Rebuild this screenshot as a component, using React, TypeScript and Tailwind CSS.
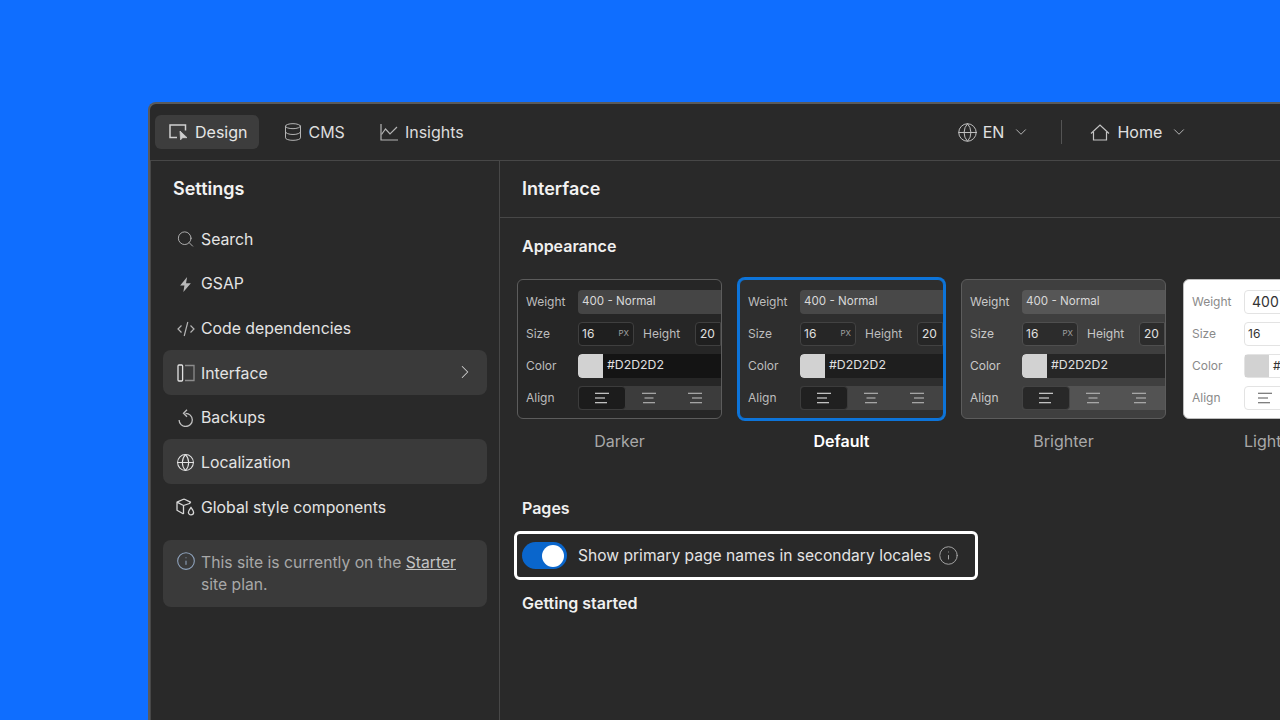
import { ChevronDown, ChevronRight, Database, Globe, Info, Search } from "lucide-react";
import type { ReactNode } from "react";

const DesignIcon = () => (
  <svg width="19" height="17" viewBox="0 0 19 17" fill="none" className="text-[#d0d0d0]">
    <path d="M8 13.500H1V1h15.500v5.500" stroke="currentColor" strokeWidth="1.500" />
    <path d="M11 7l.6 8.800 2-2.100h4.400z" fill="currentColor" stroke="currentColor" strokeWidth="0.800" strokeLinejoin="round" />
  </svg>
);

const ChartIcon = () => (
  <svg width="18" height="17" viewBox="0 0 18 17" fill="none" className="text-[#b4b4b4]">
    <path d="M1 0v16h17" stroke="currentColor" strokeWidth="1.200" />
    <path d="M1.500 10.500 5.500 5l4.500 5 7-7" stroke="currentColor" strokeWidth="1.200" />
  </svg>
);

const CodeIcon = () => (
  <svg width="18" height="16" viewBox="0 0 18 16" fill="none" className="text-[#b4b4b4]">
    <path d="M4.500 4.500 1 8l3.500 3.500M13.500 4.500 17 8l-3.500 3.500M10.800 1 7.200 15" stroke="currentColor" strokeWidth="1.200" />
  </svg>
);

const PanelIcon = () => (
  <svg width="18" height="18" viewBox="0 0 18 18" fill="none">
    <rect x="1" y="1" width="4.600" height="16" rx="1" stroke="#e2e2e2" strokeWidth="1.300" />
    <path d="M8 1.500h9v15H8" stroke="#8c8c8c" strokeWidth="1.300" />
  </svg>
);

const StyleIcon = () => (
  <svg width="19" height="18" viewBox="0 0 19 18" fill="none" className="text-[#d8d8d8]">
    <path d="M8 1 1 4.200v8L7.500 16M8 1l6.500 3.200-1 1.500M1 4.200l6.500 3.300 6-2M7.500 7.500V16" stroke="currentColor" strokeWidth="1.300" strokeLinejoin="round" />
    <path d="M15 9.500c1.500 2 2.600 3.300 2.600 4.800a2.600 2.600 0 0 1-5.200 0c0-1.500 1.100-2.800 2.600-4.800z" stroke="currentColor" strokeWidth="1.300" />
  </svg>
);

const BoltIcon = () => (
  <svg width="11" height="15" viewBox="0 0 10 14" className="text-[#b8b8b8]">
    <path d="M6.500 0 0 8h4L3 14l7-8.200H5.500z" fill="currentColor" />
  </svg>
);

const BackupIcon = () => (
  <svg width="18" height="18" viewBox="0 0 18 18" fill="none" className="text-[#c0c0c0]">
    <path d="M8.500 4.300a6.600 6.600 0 1 1-6.400 6.600" stroke="currentColor" strokeWidth="1.300" />
    <path d="M10 .8 6.500 4.300 10 7.800" stroke="currentColor" strokeWidth="1.300" />
  </svg>
);

const HomeIcon = () => (
  <svg width="20" height="17" viewBox="0 0 20 17" fill="none" className="text-[#c4c4c4]">
    <path d="M1 9.500 10 1l9 8.500M3.500 8v8h13V8" stroke="currentColor" strokeWidth="1.200" />
  </svg>
);

const AlignIcon = ({ side, color }: { side: "left" | "center" | "right"; color: string }) => {
  const short = side === "left" ? "M1 7h10" : side === "center" ? "M3.500 7h9" : "M5 7h10";
  return (
    <svg width="16" height="14" viewBox="0 0 16 14" fill="none" stroke={color} strokeWidth="1.100">
      <path d="M1 2.300h14" />
      <path d={short} />
      <path d={side === "left" ? "M1 11.700h12" : side === "center" ? "M2 11.700h12" : "M3 11.700h12"} />
    </svg>
  );
};

function SideItem({ icon, label, active, chevron }: { icon: ReactNode; label: string; active?: boolean; chevron?: boolean }) {
  return (
    <div className={`flex h-[44.700px] items-center gap-[6px] rounded-lg px-[13px] text-[15.800px] text-[#e4e4e4] ${active ? "bg-[#3a3a3a]" : ""}`}>
      <span className="flex w-[19px] justify-center pt-[2px]">{icon}</span>
      <span className="flex-1 pt-[2px]">{label}</span>
      {chevron && <ChevronRight size={22} strokeWidth={1.100} className="mr-[-2px] text-[#cfcfcf]" />}
    </div>
  );
}

const THEMES = {
  darker: {
    card: "border border-[#5c5c5c] bg-[#262626]",
    label: "text-[#bdbdbd]",
    weight: "bg-[#454545]",
    input: "border border-[#3f3f3f] bg-[#1f1f1f]",
    color: "bg-[#141414]",
    align: "bg-[#3c3c3c]",
    alignOn: "border border-[#3c3c3c] bg-[#1c1c1c]",
  },
  fallback: {
    card: "ring-[2px] ring-[#0d74d9] border border-[#0d74d9] bg-[#2e2e2e]",
    label: "text-[#bdbdbd]",
    weight: "bg-[#484848]",
    input: "border border-[#424242] bg-[#262626]",
    color: "bg-[#1e1e1e]",
    align: "bg-[#434343]",
    alignOn: "border border-[#3c3c3c] bg-[#202020]",
  },
  brighter: {
    card: "border border-[#5c5c5c] bg-[#3f3f3f]",
    label: "text-[#c8c8c8]",
    weight: "bg-[#565656]",
    input: "border border-[#4f4f4f] bg-[#2c2c2c]",
    color: "bg-[#262626]",
    align: "bg-[#535353]",
    alignOn: "border border-[#444] bg-[#282828]",
  },
};

function DarkCard({ theme, name, selected }: { theme: keyof typeof THEMES; name: string; selected?: boolean }) {
  const t = THEMES[theme];
  return (
    <div className="flex w-[205px] shrink-0 flex-col items-center">
      <div className={`flex h-[140px] w-full flex-col justify-center gap-2 rounded-md pt-[1px] font-normal ${t.card}`}>
        <div className="flex h-6 items-center text-xs">
          <span className={`w-[52px] shrink-0 pl-2 ${t.label}`}>Weight</span>
          <div className={`ml-2 flex h-6 flex-1 items-center rounded-l pl-1 text-[11.600px] text-[#d8d8d8] ${t.weight}`}>400 - Normal</div>
        </div>
        <div className="flex h-6 items-center text-xs">
          <span className={`w-[52px] shrink-0 pl-2 ${t.label}`}>Size</span>
          <div className={`ml-2 flex h-6 w-[56px] shrink-0 items-center justify-between rounded pl-[3px] pr-1 text-[#e0e0e0] ${t.input}`}>
            16<span className="text-[8px] text-[#a0a0a0]">PX</span>
          </div>
          <span className={`ml-[9px] w-[44px] shrink-0 ${t.label}`}>Height</span>
          <div className={`ml-[8px] flex h-6 min-w-0 flex-1 items-center rounded-l pl-1 text-[#e0e0e0] ${t.input}`}>20</div>
        </div>
        <div className="flex h-6 items-center text-xs">
          <span className={`w-[52px] shrink-0 pl-2 ${t.label}`}>Color</span>
          <div className={`ml-2 flex h-6 flex-1 items-center overflow-hidden rounded-l text-[12.300px] text-[#e0e0e0] ${t.color}`}>
            <span className="h-full w-[25px] shrink-0 rounded-l bg-[#d2d2d2]" />
            <span className="ml-1">#D2D2D2</span>
          </div>
        </div>
        <div className="flex h-6 items-center text-xs">
          <span className={`w-[52px] shrink-0 pl-2 ${t.label}`}>Align</span>
          <div className={`ml-2 flex h-6 flex-1 items-center rounded-l ${t.align}`}>
            <span className={`flex h-6 w-[48px] shrink-0 items-center justify-center rounded ${t.alignOn}`}><AlignIcon side="left" color="#dedede" /></span>
            <span className="flex w-[46px] shrink-0 justify-center"><AlignIcon side="center" color="#b8b8b8" /></span>
            <span className="flex w-[46px] shrink-0 justify-center"><AlignIcon side="right" color="#b8b8b8" /></span>
          </div>
        </div>
      </div>
      <span className={`mt-[12px] text-base leading-5 ${selected ? "font-semibold text-white" : "text-[#a8a8a8]"}`}>{name}</span>
    </div>
  );
}

function LightCard() {
  return (
    <div className="flex w-[205px] shrink-0 flex-col">
      <div className="flex h-[140px] w-full flex-col justify-center gap-2 overflow-hidden rounded-md border border-[#bdbdbd] bg-white pl-2 pt-[2px] text-xs text-[#8a8a8a]">
        <div className="flex h-6 items-center">
          <span className="w-[52px] shrink-0">Weight</span>
          <div className="flex h-6 flex-1 items-center rounded-l border border-[#e3e3e3] pl-[7px] text-sm text-[#333]">400</div>
        </div>
        <div className="flex h-6 items-center">
          <span className="w-[52px] shrink-0">Size</span>
          <div className="flex h-6 flex-1 items-center rounded-l border border-[#e3e3e3] pl-[3px] text-[#333]">16</div>
        </div>
        <div className="flex h-6 items-center">
          <span className="w-[52px] shrink-0">Color</span>
          <div className="flex h-6 flex-1 items-center rounded-l border border-[#e3e3e3] text-[#333]">
            <span className="h-full w-6 shrink-0 bg-[#d2d2d2]" />
            <span className="ml-1">#D2D2D2</span>
          </div>
        </div>
        <div className="flex h-6 items-center">
          <span className="w-[52px] shrink-0">Align</span>
          <div className="flex h-6 flex-1 items-center rounded-l border border-[#e3e3e3] pl-3">
            <AlignIcon side="left" color="#555" />
          </div>
        </div>
      </div>
      <span className="ml-[61px] mt-[12px] text-base leading-5 text-[#a8a8a8]">Light</span>
    </div>
  );
}

export default function App() {
  return (
    <div className="h-[720px] w-[1280px] overflow-hidden bg-[#0f6eff] pl-[148px] pt-[102px] font-['Inter','Liberation_Sans',sans-serif] text-white">
      <div className="flex h-[640px] w-[1150px] flex-col rounded-tl-lg border-l-2 border-t-2 border-[#5a5a5a] bg-[#292929]">
        {/* top bar */}
        <div className="flex h-[57px] shrink-0 items-center border-b border-[#474747] pl-[5px] text-base">
          <div className="flex h-[34px] items-center gap-[7px] rounded-md bg-[#3d3d3d] pl-[14px] pr-3 text-[#e6e6e6]">
            <DesignIcon />
            <span>Design</span>
          </div>
          <div className="ml-[24px] flex items-center gap-[5px] text-[#dcdcdc]">
            <Database size={20} strokeWidth={1.200} className="text-[#b4b4b4]" />
            <span>CMS</span>
          </div>
          <div className="ml-[35px] flex items-center gap-[7px] text-[#dcdcdc]">
            <ChartIcon />
            <span>Insights</span>
          </div>
          <div className="ml-[493px] flex items-center gap-[5px] text-[#e0e0e0]">
            <Globe size={21} strokeWidth={1.100} className="text-[#c4c4c4]" />
            <span>EN</span>
            <ChevronDown size={18} strokeWidth={1.200} className="ml-[3px] text-[#c4c4c4]" />
          </div>
          <div className="ml-[31px] h-6 w-px bg-[#545454]" />
          <div className="ml-[28px] flex items-center gap-[7px] text-[#e0e0e0]">
            <HomeIcon />
            <span>Home</span>
            <ChevronDown size={18} strokeWidth={1.200} className="ml-[1px] text-[#c4c4c4]" />
          </div>
        </div>

        <div className="flex min-h-0 flex-1">
          {/* sidebar */}
          <aside className="flex w-[350px] shrink-0 flex-col border-x border-[#474747] px-[12px]">
            <h2 className="ml-[10px] mt-[17px] text-lg font-semibold leading-[22px] text-[#f2f2f2]">Settings</h2>
            <div className="mt-[16px] flex flex-col">
              <SideItem label="Search" icon={<Search size={20} strokeWidth={1.100} className="text-[#c0c0c0]" />} />
              <SideItem label="GSAP" icon={<BoltIcon />} />
              <SideItem label="Code dependencies" icon={<CodeIcon />} />
              <SideItem active chevron label="Interface" icon={<PanelIcon />} />
              <SideItem label="Backups" icon={<BackupIcon />} />
              <SideItem active label="Localization" icon={<Globe size={21} strokeWidth={1.300} className="text-[#e2e2e2]" />} />
              <SideItem label="Global style components" icon={<StyleIcon />} />
            </div>
            <div className="mt-[11px] flex h-[67px] gap-[5px] rounded-lg bg-[#3a3a3a] pl-[13px] pr-3 pt-[12px] text-[15.700px] leading-[22px] text-[#a8a8a8]">
              <Info size={20} strokeWidth={1.300} className="mt-[-1px] shrink-0 text-[#8fa3bd]" />
              <p className="w-[270px]">This site is currently on the <span className="text-[#c4c4c4] underline">Starter</span> site plan.</p>
            </div>
          </aside>

          {/* main */}
          <main className="min-w-0 flex-1 overflow-hidden">
            <div className="flex h-[57px] items-center border-b border-[#474747] pl-[22px]">
              <h1 className="text-lg font-semibold text-[#f2f2f2]">Interface</h1>
            </div>
            <h3 className="ml-[22px] mt-[18px] text-base font-semibold leading-5 text-[#f0f0f0]">Appearance</h3>
            <div className="ml-[17px] mt-[23px] flex gap-[17px]">
              <DarkCard theme="darker" name="Darker" />
              <DarkCard theme="fallback" name="Default" selected />
              <DarkCard theme="brighter" name="Brighter" />
              <LightCard />
            </div>
            <h3 className="ml-[22px] mt-[47px] text-base font-semibold leading-5 text-[#f0f0f0]">Pages</h3>
            <div className="ml-[14px] mt-[13px] flex h-[49px] w-[464px] items-center rounded-md border-[3px] border-white pl-[5px]">
              <div className="flex h-[27px] w-[45px] shrink-0 items-center justify-end rounded-full bg-[#0a66cc] pr-[3px]">
                <span className="h-[22px] w-[22px] rounded-full bg-white" />
              </div>
              <span className="ml-[11px] text-[15.600px] text-[#e4e4e4]">Show primary page names in secondary locales</span>
              <Info size={21} strokeWidth={1.100} className="ml-[7px] text-[#a8a8a8]" />
            </div>
            <h3 className="ml-[22px] mt-[13px] text-base font-semibold leading-5 text-[#f0f0f0]">Getting started</h3>
          </main>
        </div>
      </div>
    </div>
  );
}
